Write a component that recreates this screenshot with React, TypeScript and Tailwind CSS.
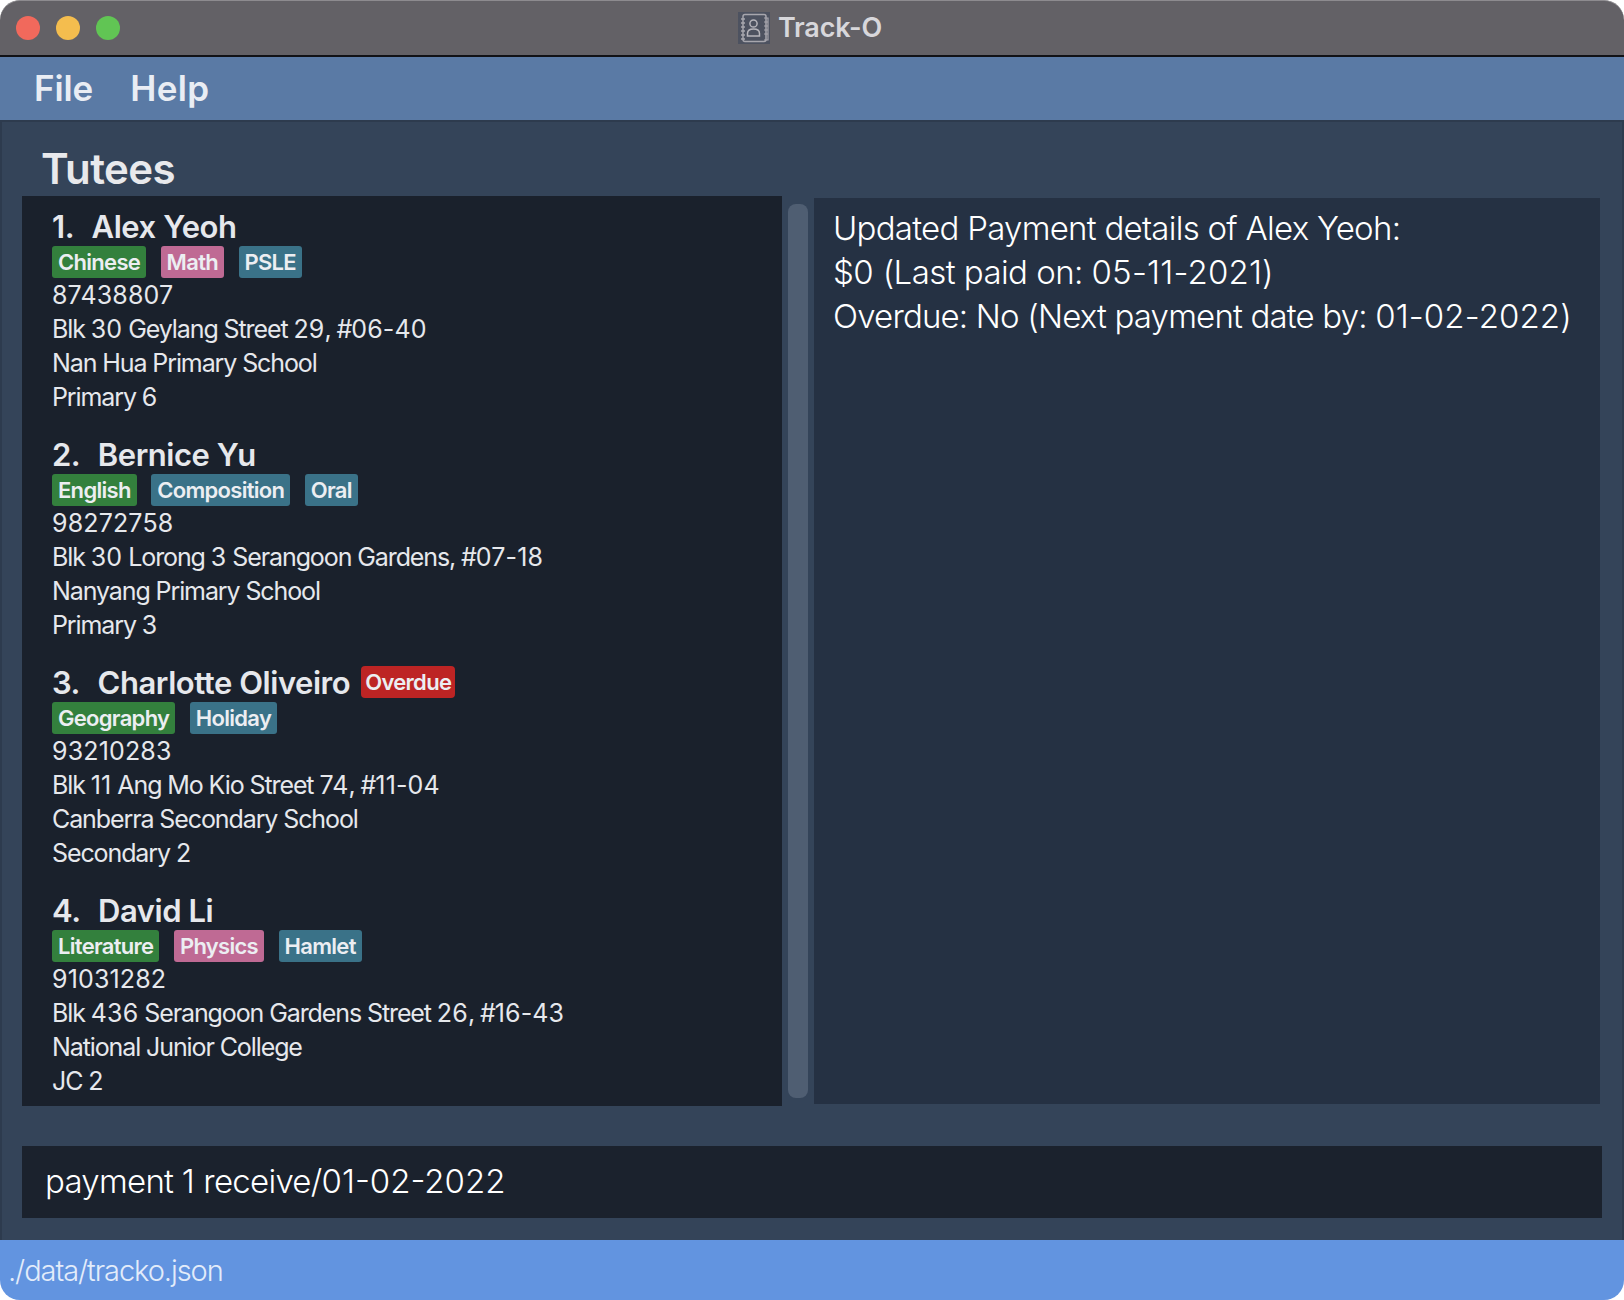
const F = "[font-family:Inter,'Noto_Sans',sans-serif]";

type Tag = { t: string; c: string };
const G = "bg-[#33803d]", P = "bg-[#bf6a94]", B = "bg-[#3a7288]";
const tutees: { n: string; name: string; overdue?: boolean; tags: Tag[]; lines: string[] }[] = [
  { n: "1.", name: "Alex Yeoh", tags: [{ t: "Chinese", c: G }, { t: "Math", c: P }, { t: "PSLE", c: B }], lines: ["87438807", "Blk 30 Geylang Street 29, #06-40", "Nan Hua Primary School", "Primary 6"] },
  { n: "2.", name: "Bernice Yu", tags: [{ t: "English", c: G }, { t: "Composition", c: B }, { t: "Oral", c: B }], lines: ["98272758", "Blk 30 Lorong 3 Serangoon Gardens, #07-18", "Nanyang Primary School", "Primary 3"] },
  { n: "3.", name: "Charlotte Oliveiro", overdue: true, tags: [{ t: "Geography", c: G }, { t: "Holiday", c: B }], lines: ["93210283", "Blk 11 Ang Mo Kio Street 74, #11-04", "Canberra Secondary School", "Secondary 2"] },
  { n: "4.", name: "David Li", tags: [{ t: "Literature", c: G }, { t: "Physics", c: P }, { t: "Hamlet", c: B }], lines: ["91031282", "Blk 436 Serangoon Gardens Street 26, #16-43", "National Junior College", "JC 2"] },
];

// The reference font sets digits wider than its letters, so digit runs get their own tracking.
function Mixed({ text, digits }: { text: string; digits: string }) {
  return (
    <>
      {text.split(/([\d-]+)/).map((part, i) =>
        i % 2 === 1 ? <span key={i} className={digits}>{part}</span> : <span key={i}>{part}</span>
      )}
    </>
  );
}

function Badge({ t, c }: Tag) {
  return <span className={`${c} h-8 px-1.5 rounded-[3px] text-[22px] leading-8 font-semibold text-[#eceef2] tracking-[-0.7px]`}>{t}</span>;
}

function Card({ x }: { x: (typeof tutees)[number] }) {
  return (
    <div className="h-[228px] pl-[30px]">
      <div className="h-[42px] pt-1 flex items-center text-[#e6e8ec] text-[31px] font-semibold tracking-[-0.45px]">
        <span className="mr-[17.5px]">{x.n}</span>
        <span>{x.name}</span>
        {x.overdue && <span className="ml-[11px] mb-[2px] h-8 px-1 rounded-[4px] bg-[#bd2424] text-[22px] leading-8 font-semibold text-[#eceef2] tracking-[-0.7px]">Overdue</span>}
      </div>
      <div className="flex gap-[14.5px]">
        {x.tags.map((t) => <Badge key={t.t} {...t} />)}
      </div>
      {x.lines.map((l) => (
        <div key={l} className="h-[34px] leading-[34px] text-[25px] text-[#e6e8ec] tracking-[-1.1px] whitespace-nowrap">
          <Mixed text={l} digits="tracking-[0.15px]" />
        </div>
      ))}
    </div>
  );
}

export default function App() {
  return (
    <div className={`${F} w-[1624px] h-[1300px] bg-white flex flex-col overflow-hidden`}>
      <div className="relative h-[57px] shrink-0 rounded-t-[20px] bg-[#636166] border-t border-t-[#8d8b8f] border-b-2 border-b-[#111216] flex items-center justify-center">
        <div className="absolute left-4 top-[15px] flex gap-4">
          <span className="w-6 h-6 rounded-full bg-[#f1695c]" />
          <span className="w-6 h-6 rounded-full bg-[#f4bd4e]" />
          <span className="w-6 h-6 rounded-full bg-[#61c554]" />
        </div>
        <div className="flex items-center gap-2 pr-[4px]">
          <svg width="32" height="32" viewBox="0 0 32 32" fill="none">
            <rect width="32" height="32" fill="#4d5260" />
            <rect x="5" y="2.5" width="23" height="27" rx="2" stroke="#a7a6ad" strokeWidth="1.5" />
            <path d="M3 7h4M3 11h4M3 15h4M3 19h4M3 23h4M3 27h4" stroke="#a7a6ad" strokeWidth="1.3" />
            <path d="M26 6h4v22h-4M26 10h4M26 14h4M26 18h4M26 22h4" stroke="#a7a6ad" strokeWidth="1.2" />
            <circle cx="15.5" cy="11.5" r="3.6" stroke="#b6b5bb" strokeWidth="1.5" />
            <path d="M9.500 24v-2.500c0-3 2.500-4.500 6-4.500s6 1.500 6 4.500V24z" stroke="#b6b5bb" strokeWidth="1.5" />
          </svg>
          <span className="text-[27px] font-semibold text-[#d8d7db] tracking-[-0.15px]">Track-O</span>
        </div>
      </div>
      <div className="h-[63px] shrink-0 bg-[#5a7aa5] flex items-center pl-[34px] gap-[37px] text-[35px] font-semibold text-[#e9edf4]">
        <span className="tracking-[-0.1px]">File</span>
        <span className="tracking-[0.4px]">Help</span>
      </div>
      <div className="flex-1 min-h-0 bg-[#344459] border-x-2 border-t-2 border-[#2d3b4e] pl-5 pr-5 flex flex-col">
        <div className="h-[74px] pl-[19px] pt-[21px] text-[42px] leading-[52px] font-semibold text-[#e8e9ec] tracking-[-0.6px]">Tutees</div>
        <div className="flex h-[910px] shrink-0">
          <div className="w-[760px] h-full bg-[#1a212c] pt-[8px] overflow-hidden">
            {tutees.map((x) => <Card key={x.n} x={x} />)}
          </div>
          <div className="w-8 h-full py-2 pl-1.5 pr-1.5">
            <div className="w-5 h-full rounded-[8px] bg-[#4f5e72]" />
          </div>
          <div className="w-[786px] mt-0.5 h-[906px] bg-[#253143] pl-[19px] pt-[8px] text-[33px] leading-11 text-white tracking-[-0.73px] font-light whitespace-nowrap">
            <div><Mixed text="Updated Payment details of Alex Yeoh:" digits="tracking-[0.1px]" /></div>
            <div className="tracking-[-0.55px]"><Mixed text="$0 (Last paid on: 05-11-2021)" digits="tracking-[0.2px]" /></div>
            <div className="tracking-[-0.82px]"><Mixed text="Overdue: No (Next payment date by: 01-02-2022)" digits="tracking-[0.1px]" /></div>
          </div>
        </div>
        <div className="mt-10 h-[72px] w-[1580px] shrink-0 bg-[#1b222d] pl-[23px] flex items-center text-[33px] text-white tracking-[-0.73px] font-light">
          <div><Mixed text="payment 1 receive/01-02-2022" digits="tracking-[0px]" /></div>
        </div>
      </div>
      <div className="h-[60px] shrink-0 rounded-b-[20px] bg-[#6294e0] flex items-center pl-2 pt-0.5 text-[29px] text-[#e3ecfa] tracking-[-1.06px] font-light">
        ./data/tracko.json
      </div>
    </div>
  );
}
